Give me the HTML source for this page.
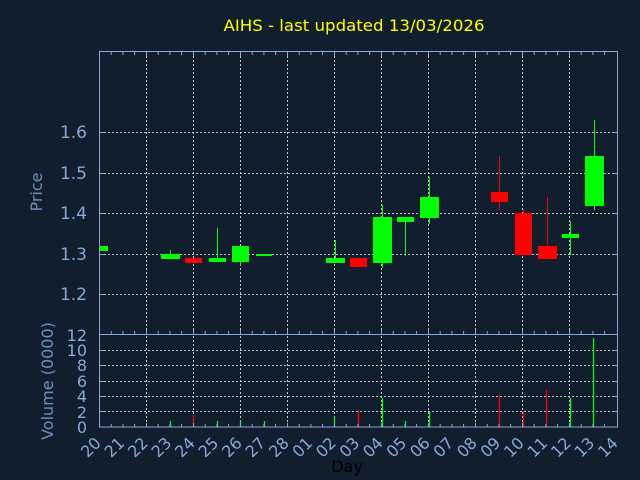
<!DOCTYPE html>
<html><head><meta charset="utf-8"><style>
html,body{margin:0;padding:0;background:#101e2e;width:640px;height:480px;overflow:hidden}
svg{display:block}
text{font-family:"DejaVu Sans","Liberation Sans",sans-serif}
</style></head><body>
<svg width="640" height="480" viewBox="0 0 640 480" xmlns="http://www.w3.org/2000/svg">
<rect width="640" height="480" fill="#101e2e"/>
<text x="354" y="31" fill="#ffff00" font-size="16" text-anchor="middle" textLength="261" lengthAdjust="spacingAndGlyphs">AIHS - last updated 13/03/2026</text>
<!-- grid -->
<g stroke="#c8c8c8" stroke-width="1" stroke-dasharray="2,2" fill="none">
<path d="M146.5 52V427M193.5 52V427M240.5 52V427M287.5 52V427M334.5 52V427M381.5 52V427M428.5 52V427M475.5 52V427M522.5 52V427M569.5 52V427"/>
<path d="M100 132.5H617M100 173.5H617M100 213.5H617M100 254.5H617M100 294.5H617"/>
<path d="M100 350.5H617M100 365.5H617M100 381.5H617M100 396.5H617M100 411.5H617"/>
</g>
<!-- candles -->
<g>
<rect x="99" y="246" width="9" height="5" fill="#00ff00"/>
<line x1="170.5" y1="250" x2="170.5" y2="254" stroke="#00ff00"/><rect x="161" y="254" width="19" height="5" fill="#00ff00"/>
<rect x="185" y="258" width="17" height="5" fill="#ff0000"/>
<line x1="217.5" y1="228" x2="217.5" y2="262" stroke="#00ff00"/><rect x="209" y="258" width="17" height="4" fill="#00ff00"/>
<line x1="240.5" y1="262" x2="240.5" y2="265" stroke="#00ff00"/><rect x="232" y="246" width="17" height="16" fill="#00ff00"/>
<rect x="256" y="254" width="16" height="2" fill="#00ff00"/>
<line x1="335.5" y1="240" x2="335.5" y2="258" stroke="#00ff00"/><rect x="326" y="258" width="19" height="5" fill="#00ff00"/>
<rect x="350" y="258" width="17" height="9" fill="#ff0000"/>
<line x1="382.5" y1="205" x2="382.5" y2="268" stroke="#00ff00"/><rect x="373" y="217" width="19" height="46" fill="#00ff00"/>
<line x1="405.5" y1="222" x2="405.5" y2="256" stroke="#00ff00"/><rect x="397" y="217" width="17" height="5" fill="#00ff00"/>
<line x1="429.5" y1="177" x2="429.5" y2="224" stroke="#00ff00"/><rect x="420" y="197" width="19" height="21" fill="#00ff00"/>
<line x1="499.5" y1="156" x2="499.5" y2="210" stroke="#ff0000"/><rect x="491" y="192" width="17" height="10" fill="#ff0000"/>
<line x1="523.5" y1="209" x2="523.5" y2="213" stroke="#ff0000"/><rect x="515" y="213" width="17" height="42" fill="#ff0000"/>
<line x1="547.5" y1="197" x2="547.5" y2="246" stroke="#ff0000"/><rect x="538" y="246" width="19" height="13" fill="#ff0000"/>
<line x1="570.5" y1="221" x2="570.5" y2="255" stroke="#00ff00"/><rect x="562" y="234" width="17" height="4" fill="#00ff00"/>
<line x1="594.5" y1="120" x2="594.5" y2="210" stroke="#00ff00"/><rect x="585" y="156" width="19" height="50" fill="#00ff00"/>
</g>
<!-- volume -->
<g stroke-width="1.3">
<line x1="170.5" y1="421" x2="170.5" y2="427" stroke="#00ff00"/>
<line x1="193.5" y1="415" x2="193.5" y2="427" stroke="#ff0000"/>
<line x1="217.5" y1="421" x2="217.5" y2="427" stroke="#00ff00"/>
<line x1="240.5" y1="421" x2="240.5" y2="427" stroke="#00ff00"/>
<line x1="264.5" y1="421" x2="264.5" y2="427" stroke="#00ff00"/>
<line x1="334.5" y1="417" x2="334.5" y2="427" stroke="#00ff00"/>
<line x1="358.5" y1="410" x2="358.5" y2="427" stroke="#ff0000"/>
<line x1="382.5" y1="398" x2="382.5" y2="427" stroke="#00ff00"/>
<line x1="405.5" y1="421" x2="405.5" y2="427" stroke="#00ff00"/>
<line x1="429.5" y1="412" x2="429.5" y2="427" stroke="#00ff00"/>
<line x1="499.5" y1="395" x2="499.5" y2="427" stroke="#ff0000"/>
<line x1="523.5" y1="411" x2="523.5" y2="427" stroke="#ff0000"/>
<line x1="546.5" y1="390" x2="546.5" y2="427" stroke="#ff0000"/>
<line x1="570.5" y1="398" x2="570.5" y2="427" stroke="#00ff00"/>
<line x1="593.5" y1="338" x2="593.5" y2="427" stroke="#00ff00"/>
</g>
<!-- frame -->
<g stroke="#88a8d8" fill="none" stroke-width="1">
<rect x="99.5" y="51.5" width="518" height="375.5"/>
<line x1="99.5" y1="334.5" x2="617.5" y2="334.5"/>
<path d="M111.2 52v3M122.9 52v3M134.6 52v3M146.5 52v4M158.2 52v3M169.9 52v3M181.6 52v3M193.5 52v4M205.2 52v3M216.9 52v3M228.6 52v3M240.5 52v4M252.2 52v3M263.9 52v3M275.6 52v3M287.5 52v4M299.2 52v3M310.9 52v3M322.6 52v3M334.5 52v4M346.2 52v3M357.9 52v3M369.6 52v3M381.5 52v4M393.2 52v3M404.9 52v3M416.6 52v3M428.5 52v4M440.2 52v3M451.9 52v3M463.6 52v3M475.5 52v4M487.2 52v3M498.9 52v3M510.6 52v3M522.5 52v4M534.2 52v3M545.9 52v3M557.6 52v3M569.5 52v4M581.2 52v3M592.9 52v3M604.6 52v3"/>
<path d="M111.2 334v-3M122.9 334v-3M134.6 334v-3M146.5 334v-4M158.2 334v-3M169.9 334v-3M181.6 334v-3M193.5 334v-4M205.2 334v-3M216.9 334v-3M228.6 334v-3M240.5 334v-4M252.2 334v-3M263.9 334v-3M275.6 334v-3M287.5 334v-4M299.2 334v-3M310.9 334v-3M322.6 334v-3M334.5 334v-4M346.2 334v-3M357.9 334v-3M369.6 334v-3M381.5 334v-4M393.2 334v-3M404.9 334v-3M416.6 334v-3M428.5 334v-4M440.2 334v-3M451.9 334v-3M463.6 334v-3M475.5 334v-4M487.2 334v-3M498.9 334v-3M510.6 334v-3M522.5 334v-4M534.2 334v-3M545.9 334v-3M557.6 334v-3M569.5 334v-4M581.2 334v-3M592.9 334v-3M604.6 334v-3"/>
<path d="M111.2 427v-3M122.9 427v-3M134.6 427v-3M146.5 427v-4M158.2 427v-3M169.9 427v-3M181.6 427v-3M193.5 427v-4M205.2 427v-3M216.9 427v-3M228.6 427v-3M240.5 427v-4M252.2 427v-3M263.9 427v-3M275.6 427v-3M287.5 427v-4M299.2 427v-3M310.9 427v-3M322.6 427v-3M334.5 427v-4M346.2 427v-3M357.9 427v-3M369.6 427v-3M381.5 427v-4M393.2 427v-3M404.9 427v-3M416.6 427v-3M428.5 427v-4M440.2 427v-3M451.9 427v-3M463.6 427v-3M475.5 427v-4M487.2 427v-3M498.9 427v-3M510.6 427v-3M522.5 427v-4M534.2 427v-3M545.9 427v-3M557.6 427v-3M569.5 427v-4M581.2 427v-3M592.9 427v-3M604.6 427v-3"/>
<path d="M100 132.5h4M100 173.5h4M100 213.5h4M100 254.5h4M100 294.5h4M617 132.5h-4M617 173.5h-4M617 213.5h-4M617 254.5h-4M617 294.5h-4"/>
<path d="M100 350.5h4M100 365.5h4M100 381.5h4M100 396.5h4M100 411.5h4M617 350.5h-4M617 365.5h-4M617 381.5h-4M617 396.5h-4M617 411.5h-4"/>
</g>
<!-- y labels -->
<g fill="#88a8d8" font-size="17" text-anchor="end">
<text x="87" y="138">1.6</text>
<text x="87" y="179">1.5</text>
<text x="87" y="219">1.4</text>
<text x="87" y="260">1.3</text>
<text x="87" y="300">1.2</text>
</g>
<g fill="#88a8d8" font-size="16" text-anchor="end">
<text x="87" y="341">12</text>
<text x="87" y="356">10</text>
<text x="87" y="371">8</text>
<text x="87" y="387">6</text>
<text x="87" y="402">4</text>
<text x="87" y="418">2</text>
<text x="87" y="433">0</text>
</g>
<text transform="translate(42,192) rotate(-90)" fill="#6f8fbf" font-size="16" text-anchor="middle">Price</text>
<text transform="translate(53,381) rotate(-90)" fill="#6f8fbf" font-size="16" text-anchor="middle">Volume (0000)</text>
<!-- x labels -->
<g fill="#88a8d8" font-size="16" text-anchor="end">
<text transform="translate(102,444) rotate(-45)">20</text>
<text transform="translate(125.5,444) rotate(-45)">21</text>
<text transform="translate(149,444) rotate(-45)">22</text>
<text transform="translate(172.5,444) rotate(-45)">23</text>
<text transform="translate(196,444) rotate(-45)">24</text>
<text transform="translate(219.5,444) rotate(-45)">25</text>
<text transform="translate(243,444) rotate(-45)">26</text>
<text transform="translate(266.5,444) rotate(-45)">27</text>
<text transform="translate(290,444) rotate(-45)">28</text>
<text transform="translate(313.5,444) rotate(-45)">01</text>
<text transform="translate(337,444) rotate(-45)">02</text>
<text transform="translate(360.5,444) rotate(-45)">03</text>
<text transform="translate(384,444) rotate(-45)">04</text>
<text transform="translate(407.5,444) rotate(-45)">05</text>
<text transform="translate(431,444) rotate(-45)">06</text>
<text transform="translate(454.5,444) rotate(-45)">07</text>
<text transform="translate(478,444) rotate(-45)">08</text>
<text transform="translate(501.5,444) rotate(-45)">09</text>
<text transform="translate(525,444) rotate(-45)">10</text>
<text transform="translate(548.5,444) rotate(-45)">11</text>
<text transform="translate(572,444) rotate(-45)">12</text>
<text transform="translate(595.5,444) rotate(-45)">13</text>
<text transform="translate(619,444) rotate(-45)">14</text>
</g>
<text x="347" y="472" fill="#000000" font-size="16" text-anchor="middle">Day</text>
</svg>
</body></html>
